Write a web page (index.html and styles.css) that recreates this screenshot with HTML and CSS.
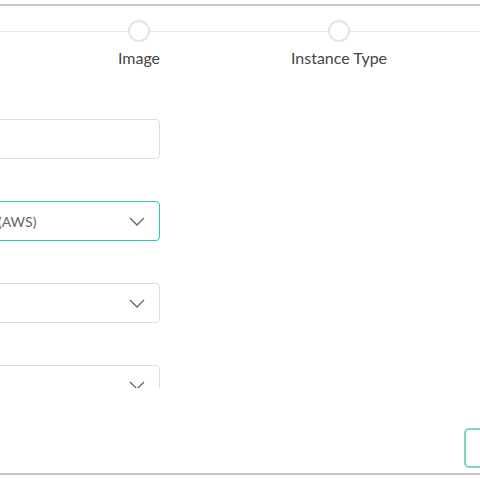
FILE: index.html
```html
<!DOCTYPE html>
<html lang="en">
<head>
    <meta charset="UTF-8">
    <meta name="viewport" content="width=device-width, initial-scale=1.0">
    <title>Create Instance</title>
    <link rel="stylesheet" href="styles.css">
</head>
<body>
    <div class="wizard">
        <div class="stepper">
            <div class="steps">
                <div class="step"><span class="dot"></span><span class="step-label">Details</span></div>
                <div class="step"><span class="dot"></span><span class="step-label">Image</span></div>
                <div class="step"><span class="dot"></span><span class="step-label">Instance Type</span></div>
                <div class="step"><span class="dot"></span><span class="step-label">Review</span></div>
            </div>
        </div>

        <div class="wizard-body">
            <div class="form">
                <div class="field">
                    <input type="text" class="input" id="name">
                </div>
                <div class="field">
                    <div class="select active">
                        <span class="value">Amazon Web Services (AWS)</span>
                        <svg class="chevron" width="16" height="9" viewBox="0 0 16 9"><polyline points="1,1 8,8 15,1" fill="none" stroke="#666" stroke-width="1.4"/></svg>
                    </div>
                </div>
                <div class="field">
                    <div class="select">
                        <span class="value"></span>
                        <svg class="chevron" width="16" height="9" viewBox="0 0 16 9"><polyline points="1,1 8,8 15,1" fill="none" stroke="#666" stroke-width="1.4"/></svg>
                    </div>
                </div>
                <div class="field">
                    <div class="select">
                        <span class="value"></span>
                        <svg class="chevron" width="16" height="9" viewBox="0 0 16 9"><polyline points="1,1 8,8 15,1" fill="none" stroke="#666" stroke-width="1.4"/></svg>
                    </div>
                </div>
            </div>
        </div>

        <div class="wizard-footer">
            <button class="next">Next</button>
        </div>
    </div>
</body>
</html>
```

FILE: styles.css
```css
html, body {
    margin: 0;
    width: 480px;
    height: 478px;
    overflow: hidden;
    background: white;
    font-family: Lato, "Open Sans", sans-serif;
    color: #444;
}

.wizard {
    margin-top: 4px;
    height: 467px;
    border-top: 2px solid #c8c8c8;
    border-bottom: 2px solid #c8c8c8;
    display: flex;
    flex-direction: column;
}

.stepper {
    padding-top: 14px;
    height: 60px;
}

.steps {
    position: relative;
    display: flex;
    margin-left: -161px;
}

.steps::before {
    content: "";
    position: absolute;
    left: 0;
    right: -400px;
    top: 11px;
    height: 1px;
    background: #e6e8ec;
}

.step {
    position: relative;
    width: 200px;
    flex-shrink: 0;
    display: flex;
    flex-direction: column;
    align-items: center;
}

.dot {
    width: 18px;
    height: 18px;
    border: 2px solid #e2e5ea;
    border-radius: 50%;
    background: white;
}

.step-label {
    margin-top: 6px;
    font-size: 16px;
    line-height: 20px;
    color: #444;
}

.wizard-body {
    height: 308px;
    overflow: hidden;
    padding-top: 39px;
    box-sizing: border-box;
}

.form {
    width: 315px;
    margin-left: -155px;
    display: flex;
    flex-direction: column;
    gap: 42px;
}

.input,
.select {
    display: flex;
    align-items: center;
    width: 100%;
    height: 40px;
    box-sizing: border-box;
    border: 1px solid #dcdcdc;
    border-radius: 4px;
    padding: 0 14px 0 12px;
    font-family: inherit;
    font-size: 14px;
    color: #666;
    background: white;
}

.select.active {
    border-color: #2ec5b6;
}

.select .value {
    flex: 1;
    white-space: nowrap;
}

.wizard-footer {
    flex: 1;
    display: flex;
    justify-content: flex-end;
    align-items: flex-start;
    padding-top: 40px;
}

.next {
    width: 96px;
    height: 40px;
    margin-right: -80px;
    border: 2px solid #7dd6c4;
    border-radius: 5px;
    background: white;
    font-family: inherit;
    font-size: 15px;
    color: #444;
}
```
